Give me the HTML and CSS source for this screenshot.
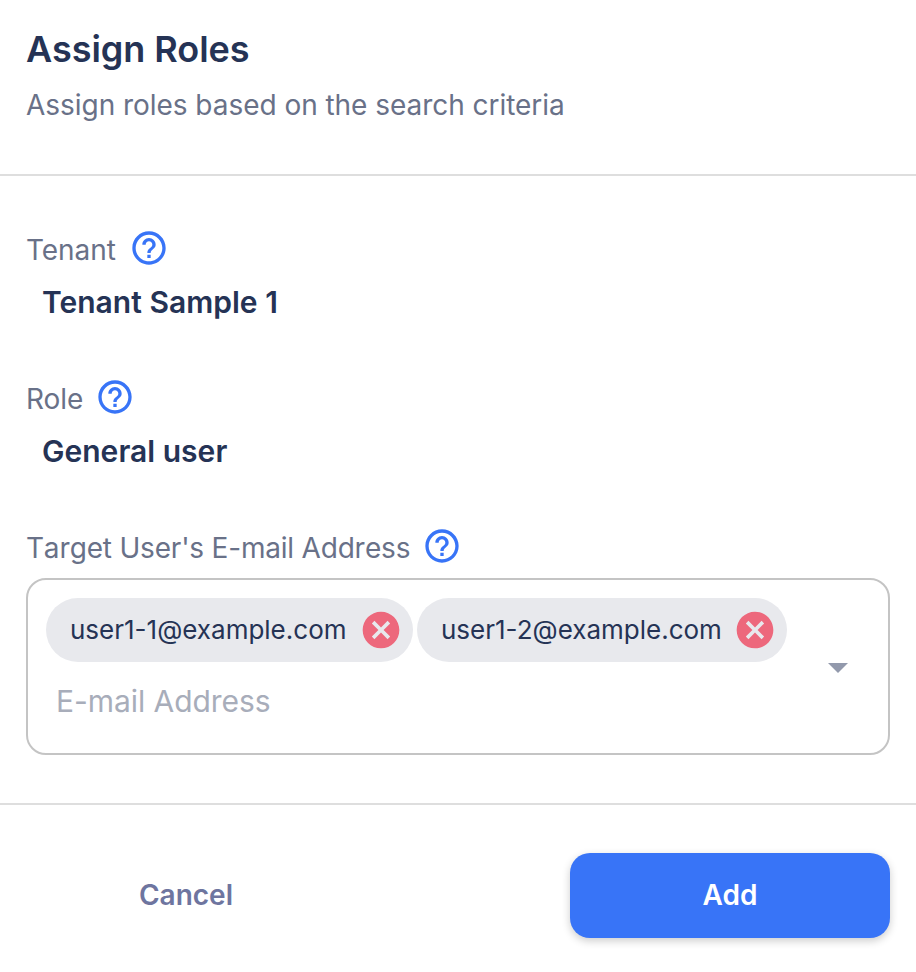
FILE: index.html
```html
<!DOCTYPE html>
<html lang="en">
<head>
<meta charset="utf-8">
<title>Assign Roles</title>
<link rel="stylesheet" href="styles.css">
</head>
<body>
<svg width="0" height="0" class="defs">
  <symbol id="help" viewBox="0 0 24 24"><path d="M11 18h2v-2h-2v2zm1-16C6.480 2 2 6.480 2 12s4.480 10 10 10 10-4.480 10-10S17.520 2 12 2zm0 18c-4.410 0-8-3.590-8-8s3.590-8 8-8 8 3.590 8 8-3.590 8-8 8zm0-14c-2.210 0-4 1.790-4 4h2c0-1.100.9-2 2-2s2 .9 2 2c0 2-3 1.750-3 5h2c0-2.250 3-2.500 3-5 0-2.210-1.790-4-4-4z"/></symbol>
  <symbol id="remove" viewBox="0 0 24 24"><path d="M12 2C6.470 2 2 6.470 2 12s4.470 10 10 10 10-4.470 10-10S17.530 2 12 2zm5 13.590L15.590 17 12 13.410 8.410 17 7 15.590 10.590 12 7 8.410 8.410 7 12 10.590 15.590 7 17 8.410 13.410 12 17 15.590z"/></symbol>
</svg>
<main class="dialog">
  <header class="header">
    <h1 class="title">Assign Roles</h1>
    <p class="subtitle">Assign roles based on the search criteria</p>
  </header>
  <section class="content">
    <div class="field">
      <div class="label"><span>Tenant</span><svg class="help"><use href="#help"/></svg></div>
      <div class="value"><span>Tenant Sample 1</span></div>
    </div>
    <div class="field">
      <div class="label role"><span>Role</span><svg class="help"><use href="#help"/></svg></div>
      <div class="value"><span>General user</span></div>
    </div>
    <div class="label target"><span>Target User's E-mail Address</span><svg class="help"><use href="#help"/></svg></div>
    <div class="combo">
      <div class="entries">
        <div class="chips">
          <div class="chip"><span>user1-1@example.com</span><svg class="remove"><use href="#remove"/></svg></div>
          <div class="chip second"><span>user1-2@example.com</span><svg class="remove"><use href="#remove"/></svg></div>
        </div>
        <div class="placeholder">E-mail Address</div>
      </div>
      <svg class="arrow" viewBox="0 0 20 10"><path d="M0 0h20L10 10z"/></svg>
    </div>
  </section>
  <footer class="footer">
    <button class="button cancel">Cancel</button>
    <button class="button add">Add</button>
  </footer>
</main>
</body>
</html>
```
FILE: styles.css
```css
* { box-sizing: border-box; }
body { margin: 0; background: #fff; font-family: Inter, sans-serif; color: #253355; }
.defs { position: absolute; }
.dialog { height: 972px; overflow: hidden; }
.header { height: 176px; padding: 27px 26px 0; border-bottom: 2px solid #dedede; }
.title { margin: 0; font-size: 36px; line-height: 44px; font-weight: 600; letter-spacing: -.03px; }
.subtitle { margin: 16px 0 0; font-size: 28px; line-height: 36px; color: #697188; letter-spacing: -.04px; }
.content { height: 629px; padding: 54px 26px 0; border-bottom: 2px solid #dedede; }
.field { height: 149px; }
.label { display: flex; align-items: center; height: 36px; font-size: 28px; color: #697188; gap: 13px; letter-spacing: -.07px; }
.label span { padding-top: 4px; }
.role { gap: 12px; }
.target { gap: 12px; font-kerning: none; letter-spacing: -.2px; }
.help { width: 40px; height: 40px; fill: #3874f7; flex: none; }
.value { padding-left: 16px; margin-top: 18px; font-size: 30px; line-height: 36px; font-weight: 600; letter-spacing: .02px; }
.combo { display: flex; width: 864px; height: 177px; margin-top: 14px; padding: 18px; border: 2px solid #c4c4c4; border-radius: 20px; }
.entries { flex: 1; }
.chips { display: flex; gap: 4px; }
.chip { display: flex; align-items: center; justify-content: space-between; width: 367px; height: 64px; padding: 0 10px 0 24px; border-radius: 32px; background: #e8e9ed; font-size: 26px; }
.chip span { padding-bottom: 1px; }
.second { width: 370px; }
.remove { width: 44px; height: 44px; fill: #ed687c; flex: none; }
.placeholder { margin: 21px 0 0 10px; font-size: 30px; line-height: 36px; color: #a8adba; letter-spacing: -.05px; }
.arrow { width: 20px; height: 10px; margin: 65px 22px 0 0; fill: #9299ac; }
.footer { display: flex; justify-content: space-between; padding: 48px 26px; }
.button { width: 320px; height: 85px; padding: 0 0 1px; border: 0; border-radius: 20px; background: none; font: 600 28px Inter, sans-serif; color: #6e759f; }
.add { background: #3874f7; color: #fff; box-shadow: 0 3px 8px #0003; }
```
